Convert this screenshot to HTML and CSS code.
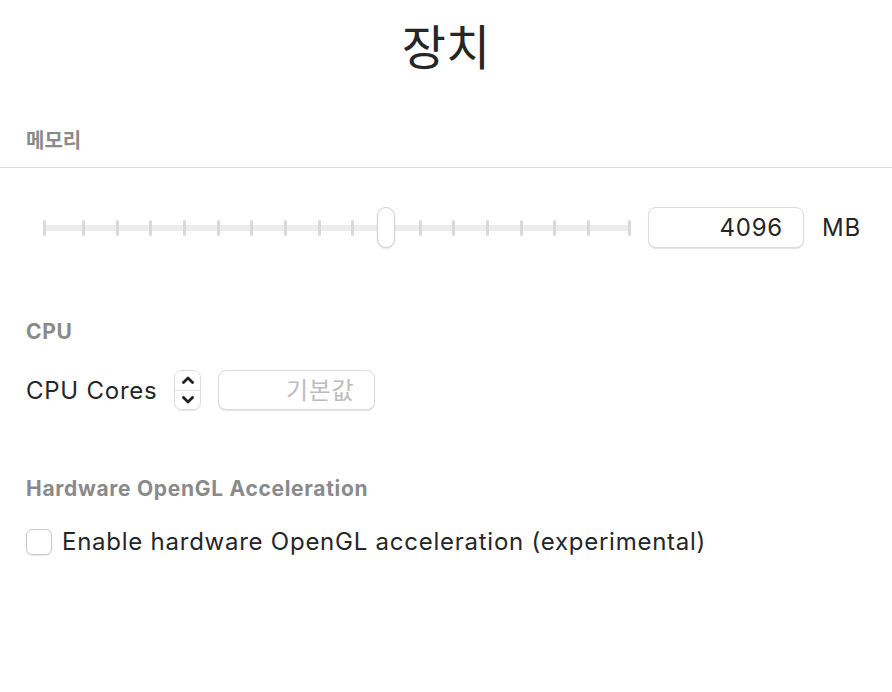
FILE: index.html
```html
<!DOCTYPE html>
<html lang="ko">
<head>
    <meta charset="UTF-8">
    <meta name="viewport" content="width=device-width, initial-scale=1.0">
    <title>장치</title>
    <link rel="stylesheet" href="styles.css">
</head>
<body>
    <h1 class="title">장치</h1>

    <section class="memory">
        <h2 class="group-title group-title-ruled">메모리</h2>
        <div class="memory-row">
            <div class="slider">
                <span class="tick"></span>
                <div class="tick-group">
                    <span class="tick"></span><span class="tick"></span><span class="tick"></span><span class="tick"></span>
                    <span class="tick"></span><span class="tick"></span><span class="tick"></span><span class="tick"></span>
                    <span class="tick"></span><span class="tick"></span><span class="tick"></span><span class="tick"></span>
                    <span class="tick"></span><span class="tick"></span><span class="tick"></span><span class="tick"></span>
                </div>
                <span class="tick"></span>
                <div class="thumb" style="left: 56.8%"></div>
            </div>
            <input class="field field-value" type="text" value="4096">
            <span class="unit">MB</span>
        </div>
    </section>

    <section class="group">
        <h2 class="group-title">CPU</h2>
        <div class="row">
            <span class="row-label">CPU Cores</span>
            <div class="stepper">
                <button class="stepper-btn" type="button">
                    <svg width="12" height="8" viewBox="0 0 12 8"><polyline points="1.5,6.5 6,2 10.5,6.5" /></svg>
                </button>
                <button class="stepper-btn" type="button">
                    <svg width="12" height="8" viewBox="0 0 12 8"><polyline points="1.5,1.5 6,6 10.5,1.5" /></svg>
                </button>
            </div>
            <input class="field field-cores" type="text" placeholder="기본값">
        </div>
    </section>

    <section class="group group-gl">
        <h2 class="group-title">Hardware OpenGL Acceleration</h2>
        <label class="check-row">
            <input class="check" type="checkbox">
            <span>Enable hardware OpenGL acceleration (experimental)</span>
        </label>
    </section>
</body>
</html>
```

FILE: styles.css
```css
body {
    margin: 0;
    font-family: Inter, "Noto Sans CJK KR", sans-serif;
    color: #262626;
    background-color: #ffffff;
}

.title {
    margin: 16px 0 0;
    font-family: "Noto Sans CJK KR", sans-serif;
    font-size: 48px;
    font-weight: 400;
    line-height: 56px;
    text-align: center;
}

.group-title {
    margin: 0;
    padding: 0 26px;
    font-size: 21px;
    font-weight: 700;
    letter-spacing: 0.7px;
    line-height: 24px;
    color: #8a8a8a;
}

.group-title-ruled {
    margin-top: 57px;
    padding-bottom: 14px;
    font-size: 20px;
    letter-spacing: 0;
    border-bottom: 1px solid #dedede;
}

/* memory slider */
.memory-row {
    display: flex;
    align-items: center;
    margin-top: 39px;
    padding-left: 43px;
}

.slider {
    position: relative;
    display: flex;
    align-items: center;
    width: 588px;
    height: 41px;
    background: linear-gradient(#ececec, #ececec) center / 100% 6px no-repeat;
}

.tick {
    width: 3px;
    height: 16px;
    border-radius: 2px;
    background-color: #d9d9d9;
}

.tick-group {
    flex: 1;
    display: flex;
    justify-content: space-between;
    margin: 0 38px 0 36px;
}

.thumb {
    position: absolute;
    top: 0;
    width: 16px;
    height: 39px;
    border: 1px solid #d2d2d2;
    border-radius: 9px;
    background-color: #ffffff;
    box-shadow: 0 1px 2px rgba(0, 0, 0, 0.12);
}

.field {
    box-sizing: border-box;
    height: 41px;
    padding: 0 20px;
    border: 1px solid #dcdcdc;
    border-radius: 8px;
    box-shadow: 0 1px 1px rgba(0, 0, 0, 0.12);
    font-family: Inter, "Noto Sans CJK KR", sans-serif;
    font-size: 24px;
    letter-spacing: 0.75px;
    color: #262626;
    text-align: right;
    outline: none;
}

.field::placeholder {
    color: #bdbdbd;
}

.field-value {
    width: 156px;
    margin-left: 17px;
}

.unit {
    margin-left: 18px;
    font-size: 24px;
    letter-spacing: 0.75px;
}

/* cpu */
.group {
    margin-top: 72px;
}

.row {
    display: flex;
    align-items: center;
    margin-top: 26px;
    padding-left: 26px;
}

.row-label {
    font-size: 24px;
    letter-spacing: 0.75px;
}

.stepper {
    display: flex;
    flex-direction: column;
    width: 27px;
    height: 40px;
    margin-left: 17px;
    box-sizing: border-box;
    border: 1px solid #dcdcdc;
    border-radius: 8px;
    box-shadow: 0 1px 1px rgba(0, 0, 0, 0.1);
    overflow: hidden;
}

.stepper-btn {
    flex: 1;
    display: flex;
    align-items: center;
    justify-content: center;
    padding: 0;
    border: none;
    background: #ffffff;
}

.stepper-btn + .stepper-btn {
    border-top: 1px solid #e2e2e2;
}

.stepper-btn polyline {
    fill: none;
    stroke: #1f1f1f;
    stroke-width: 2.8;
    stroke-linecap: round;
    stroke-linejoin: round;
}

.field-cores {
    width: 157px;
    height: 40px;
    margin-left: 17px;
}

/* opengl */
.group-gl {
    margin-top: 67px;
}

.check-row {
    display: flex;
    align-items: center;
    gap: 10px;
    margin-top: 26px;
    padding-left: 26px;
    font-size: 24px;
    letter-spacing: 0.75px;
}

.check {
    appearance: none;
    width: 26px;
    height: 26px;
    margin: 0;
    border: 1px solid #c9c9c9;
    border-radius: 6px;
    background-color: #ffffff;
    box-shadow: 0 1px 1px rgba(0, 0, 0, 0.08);
}
```
